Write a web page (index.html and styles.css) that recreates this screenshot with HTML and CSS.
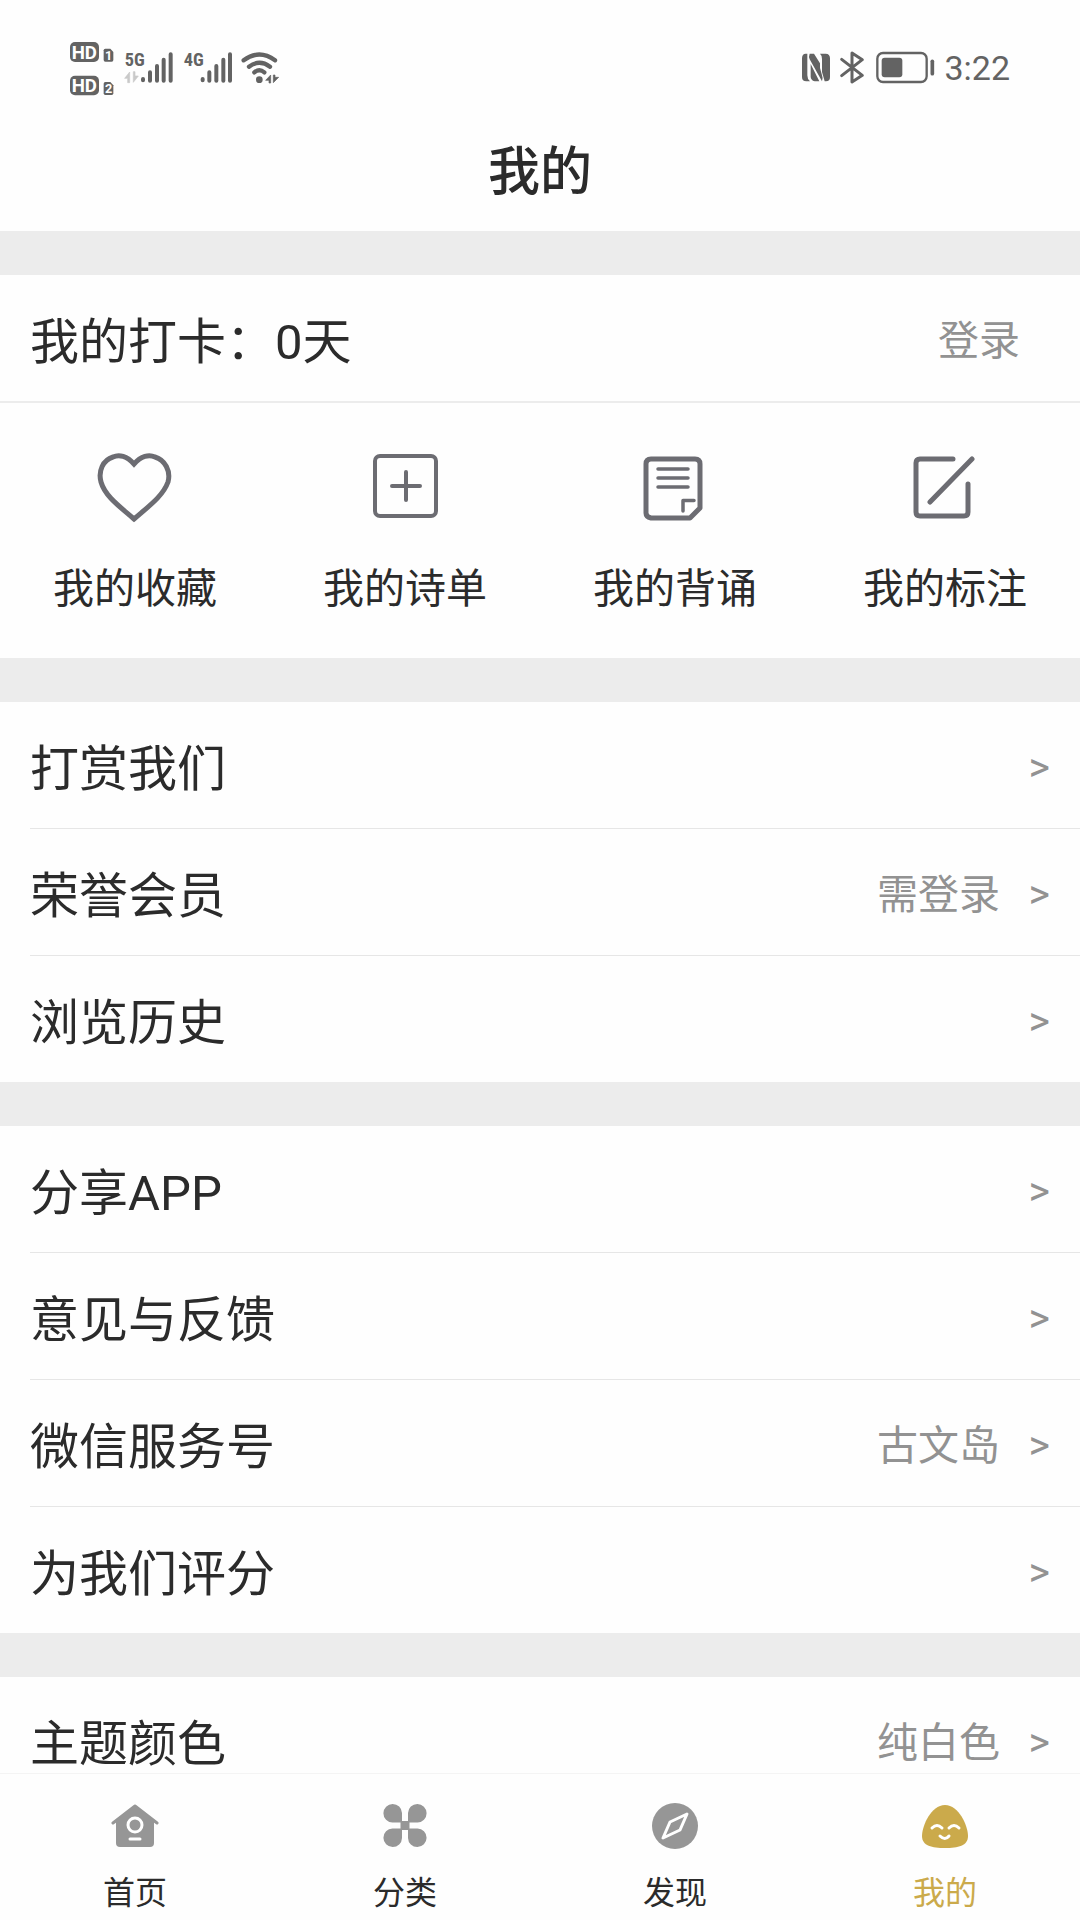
FILE: index.html
```html
<!DOCTYPE html>
<html lang="zh-CN">
<head>
<meta charset="utf-8">
<meta name="viewport" content="width=device-width, initial-scale=1">
<title>我的</title>
<link rel="stylesheet" href="styles.css">
</head>
<body>
<div class="app">
  <div class="status">
    <svg class="status-left" viewBox="0 0 690 225" aria-hidden="true">
      <g fill="#636363">
        <rect x="30" y="36" width="87" height="60" rx="15"/>
        <rect x="30" y="137" width="87" height="59" rx="15"/>
        <path d="M136 56h15l9 10v24q0 5-5 5h-19q-5 0-5-5v-29q0-5 5-5z"/>
        <path d="M136 156h15l9 10v24q0 5-5 5h-19q-5 0-5-5v-29q0-5 5-5z"/>
      </g>
      <g class="badge-text">
        <text class="hd" x="73" y="86">HD</text>
        <text class="hd" x="73" y="186">HD</text>
        <text class="sim" x="146" y="90">1</text>
        <text class="sim" x="146" y="190">2</text>
      </g>
      <g class="net-text">
        <text x="194" y="107">5G</text>
        <text x="371" y="107">4G</text>
      </g>
      <path d="M209 126v32h-6v-13h-9zM220 157v-32h5v13h10z" fill="#c9c9c9" stroke="#c9c9c9" stroke-width="2"/>
      <g stroke="#636363" stroke-width="12" stroke-linecap="round" fill="none">
        <path d="M249 147v4M270 127v25M291 108v44M311 89v63M332 73v79"/>
        <path d="M428 147v4M448 127v25M469 108v44M490 89v63M510 73v79"/>
      </g>
      <g stroke="#636363" stroke-width="13" stroke-linecap="round" fill="none">
        <path d="M551 91q47-35 94 0M567 110q31-23 63 0M583 127q15-12 30 0"/>
      </g>
      <circle cx="598" cy="149" r="10" fill="#636363"/>
      <path d="M632 135v24h-5v-8h-10zM640 158v-23h5v7h11z" fill="#636363" stroke="#636363" stroke-width="2"/>
    </svg>
    <div class="status-right">
      <svg class="status-icons" viewBox="0 -30 450 225" aria-hidden="true">
        <path d="M47 41q-11 0-11 14v56q0 13 13 13h11q-8-6-8-18V41zM59 41q-4 10 0 17l37 66q4-9 0-18L90 84V70L72 41zM62 72v38q0 10 12 14h14zM90 41q6 5 6 16v39l8 28h4q12 0 12-13V55q0-14-13-14z" fill="#636363"/>
        <path d="M155 58l62 48-31 20V39l31 20-62 48" fill="none" stroke="#636363" stroke-width="9" stroke-linejoin="round" stroke-linecap="round"/>
        <rect x="262" y="39" width="148" height="87" rx="17" fill="none" stroke="#636363" stroke-width="7"/>
        <rect x="275" y="53" width="62" height="59" rx="9" fill="#636363"/>
        <path d="M427 64v37" stroke="#636363" stroke-width="11" stroke-linecap="round"/>
      </svg>
      <time class="clock">3:22</time>
    </div>
  </div>
  <header class="header"><h1 class="title">我的</h1></header>

  <main class="content">
    <section class="group">
      <div class="row checkin">
        <span class="label">我的打卡：0天</span>
        <a class="value" href="#login">登录</a>
      </div>
      <div class="shortcuts">
        <a class="shortcut" href="#favorites">
          <svg viewBox="0 0 80 80" fill="none" stroke="#6c6c72" stroke-width="5" aria-hidden="true"><path d="M39 18C32 10 24 8 18 11C8 14 3 25 6 36C10 50 24 60 39 73C54 60 68 50 73 36C76 25 70 14 60 11C54 8 46 10 39 18z"/></svg>
          <span>我的收藏</span>
        </a>
        <a class="shortcut" href="#lists">
          <svg viewBox="0 0 80 80" fill="none" stroke="#6c6c72" stroke-width="4" stroke-linecap="round" aria-hidden="true"><rect x="10" y="10" width="61" height="60" rx="5"/><path d="M41 26v28M27 40h28"/></svg>
          <span>我的诗单</span>
        </a>
        <a class="shortcut" href="#recite">
          <svg viewBox="0 0 80 80" fill="none" stroke="#6c6c72" stroke-linecap="round" stroke-linejoin="round" aria-hidden="true"><path stroke-width="5" d="M16 13h44q5 0 5 5v44l-10 10H16q-5-1-5-5V18q0-5 5-5z"/><path stroke-width="3.5" d="M23 23h30M23 32h30M23 41h30M48 65V54.500h11"/></svg>
          <span>我的背诵</span>
        </a>
        <a class="shortcut" href="#notes">
          <svg viewBox="0 0 80 80" fill="none" stroke="#6c6c72" stroke-width="5" stroke-linecap="round" aria-hidden="true"><path d="M48 13H15q-4 0-4 4v49q0 4 4 4h44q4 0 4-4V38M67 13L25 56"/></svg>
          <span>我的标注</span>
        </a>
      </div>
    </section>

    <section class="group">
      <a class="row" href="#reward"><span class="label">打赏我们</span><span class="arrow">&gt;</span></a>
      <a class="row" href="#member"><span class="label">荣誉会员</span><span class="value">需登录</span><span class="arrow">&gt;</span></a>
      <a class="row" href="#history"><span class="label">浏览历史</span><span class="arrow">&gt;</span></a>
    </section>

    <section class="group">
      <a class="row" href="#share"><span class="label">分享APP</span><span class="arrow">&gt;</span></a>
      <a class="row" href="#feedback"><span class="label">意见与反馈</span><span class="arrow">&gt;</span></a>
      <a class="row" href="#wechat"><span class="label">微信服务号</span><span class="value">古文岛</span><span class="arrow">&gt;</span></a>
      <a class="row" href="#rate"><span class="label">为我们评分</span><span class="arrow">&gt;</span></a>
    </section>

    <section class="group">
      <a class="row" href="#theme"><span class="label">主题颜色</span><span class="value">纯白色</span><span class="arrow">&gt;</span></a>
    </section>
  </main>

  <nav class="tabs">
    <a class="tab" href="#home">
      <svg viewBox="0 0 48 48" aria-hidden="true"><path d="M2 21L24 4L46 21" fill="none" stroke="#969696" stroke-width="3" stroke-linecap="round" stroke-linejoin="round"/><path d="M24 4L43 19v22q0 4-4 4H9q-4 0-4-4V19z" fill="#969696"/><circle cx="24" cy="23" r="7" fill="none" stroke="#fff" stroke-width="3"/><path d="M19 37h10" stroke="#fff" stroke-width="3" stroke-linecap="round"/></svg>
      <span>首页</span>
    </a>
    <a class="tab" href="#category">
      <svg viewBox="0 0 48 48" fill="#969696" aria-hidden="true"><path d="M21 20.500H11.500A9.300 9.300 0 1 1 21 11zM27 20.500V11A9.300 9.300 0 1 1 36.500 20.500zM21 26.500V36A9.300 9.300 0 1 1 11.500 26.500zM27 26.500H36.500A9.300 9.300 0 1 1 27 36z"/><path d="M19.500 19h9v9h-9z"/></svg>
      <span>分类</span>
    </a>
    <a class="tab" href="#discover">
      <svg viewBox="0 0 48 48" aria-hidden="true"><circle cx="24" cy="24" r="23" fill="#969696"/><path d="M36 12L19 20L12 36L29 28z" fill="none" stroke="#fff" stroke-width="3" stroke-linejoin="round"/></svg>
      <span>发现</span>
    </a>
    <a class="tab active" href="#mine" aria-current="page">
      <svg viewBox="0 0 48 48" aria-hidden="true"><path d="M24 3C38 3 47 24 47 34C47 44 37 46 24 46C11 46 1 44 1 34C1 24 10 3 24 3z" fill="#cbaa4b"/><path d="M11 26q5-5 10 0M28 26q5-5 10 0M19 34q5 5 9 0" fill="none" stroke="#fff" stroke-width="3" stroke-linecap="round"/></svg>
      <span>我的</span>
    </a>
  </nav>
</div>
</body>
</html>
```
FILE: styles.css
```css
* {
  box-sizing: border-box;
}

body {
  margin: 0;
  background: #fefefe;
  color: #2b2b2b;
  font-family: Roboto, "Noto Sans CJK SC", sans-serif;
}

a {
  color: inherit;
  text-decoration: none;
}

svg {
  display: block;
  flex: none;
}

.app {
  display: flex;
  flex-direction: column;
  height: 100vh;
}

.status {
  display: flex;
  justify-content: space-between;
  padding: 30px 70px 0 60px;
}

.status-left {
  width: 230px;
  height: 75px;
}

.status-right {
  display: flex;
  align-items: center;
  gap: 4px;
}

.status-icons {
  width: 150px;
  height: 75px;
}

.clock {
  color: #636363;
  font-size: 34px;
  line-height: 40px;
}

.badge-text {
  fill: #fff;
  font-family: Roboto, sans-serif;
  font-weight: 700;
  text-anchor: middle;
}

.hd {
  font-size: 56px;
}

.sim {
  font-size: 38px;
}

.net-text {
  fill: #636363;
  font-family: "Roboto Condensed", Roboto, sans-serif;
  font-weight: 700;
  font-size: 55px;
}

.header {
  padding: 36px 0 26px;
}

.title {
  margin: 0;
  font-size: 52px;
  font-weight: 500;
  line-height: 64px;
  text-align: center;
}

.content {
  flex: 1;
  min-height: 0;
  overflow-y: auto;
  scrollbar-width: none;
}

.group {
  border-top: 44px solid #ececec;
}

.row {
  display: flex;
  align-items: center;
  height: 126px;
  padding: 4px 30px 0 0;
  margin-left: 30px;
}

.row + .row {
  height: 127px;
  border-top: 1px solid #e6e6e6;
}

.label {
  flex: 1;
  padding-top: 6px;
  font-size: 49px;
  line-height: 60px;
}

.value {
  padding-top: 2px;
  color: #929292;
  font-size: 41px;
  line-height: 60px;
}

.arrow {
  width: 50px;
  color: #929292;
  font-size: 41px;
  line-height: 60px;
  text-align: right;
}

.checkin {
  height: 128px;
  margin-left: 0;
  padding: 4px 60px 0 30px;
  border-bottom: 2px solid #ececec;
}

.shortcuts {
  display: grid;
  grid-template-columns: repeat(4, 1fr);
  padding: 43px 0 39px;
}

.shortcut {
  display: flex;
  flex-direction: column;
  align-items: center;
  gap: 33px;
  font-size: 41px;
  line-height: 60px;
}

.shortcut svg {
  width: 80px;
  height: 80px;
}

.tabs {
  display: grid;
  grid-template-columns: repeat(4, 1fr);
  padding: 28px 0 5px;
  border-top: 1px solid #f4f4f4;
  background: #fefefe;
}

.tab {
  display: flex;
  flex-direction: column;
  align-items: center;
  gap: 21px;
  font-size: 32px;
  line-height: 44px;
}

.tab svg {
  width: 48px;
  height: 48px;
}

.active {
  color: #cbaa4b;
}
```
